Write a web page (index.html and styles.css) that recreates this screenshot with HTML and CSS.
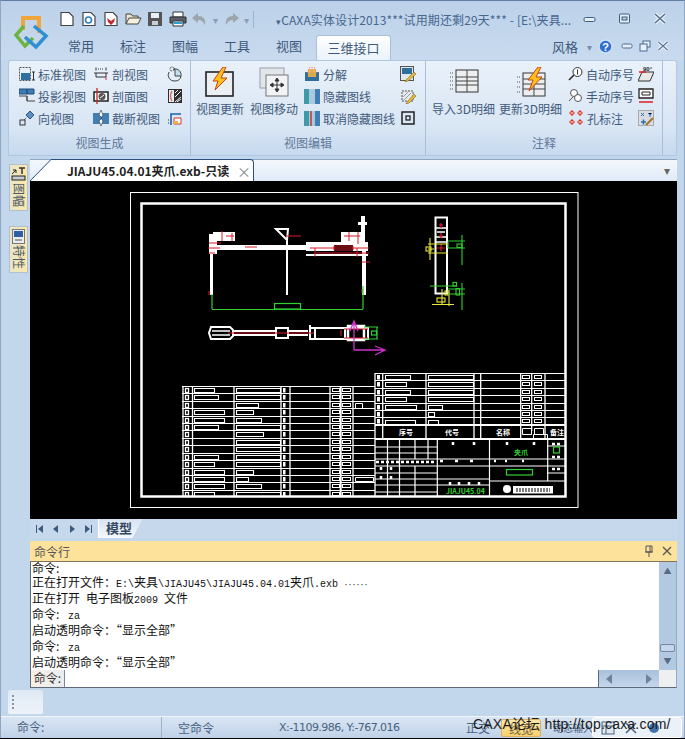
FILE: index.html
```html
<!DOCTYPE html>
<html lang="zh-CN">
<head>
    <meta charset="UTF-8">
    <title>CAXA实体设计2013</title>
    <link rel="stylesheet" href="styles.css">
</head>
<body>
<div class="window">
    <svg width="0" height="0" class="defs">
        <defs>
            <g id="row-a">
                <path d="M182 0h193" stroke="#fff" stroke-width="1"/>
                <rect x="185.500" y="2" width="3" height="4" fill="none" stroke="#fff" stroke-width="1.300"/>
                <rect x="283" y="1.500" width="2.500" height="4.500" fill="#fff"/>
                <rect x="332.500" y="2" width="7" height="3" fill="none" stroke="#fff"/>
                <rect x="342.500" y="2" width="8" height="3" fill="none" stroke="#fff"/>
            </g>
            <g id="row-b">
                <path d="M375 0h191" stroke="#fff" stroke-width="1"/>
                <rect x="377" y="1.500" width="3" height="4.500" fill="#fff"/>
                <rect x="522.500" y="2" width="7" height="3" fill="none" stroke="#fff"/>
                <rect x="534.500" y="2" width="7" height="3" fill="none" stroke="#fff"/>
            </g>
        </defs>
    </svg>

    <header class="head">
        <div class="logo-box">
            <svg class="logo" width="36" height="36" viewBox="0 0 36 36">
                <path d="M10 16V4h16v15" fill="none" stroke="#f0a63a" stroke-width="4"/>
                <path d="M11 12L3 21l9 11 8-8" fill="none" stroke="#6cb33f" stroke-width="3.500"/>
                <path d="M21 12l12 10-10 11-11-10" fill="none" stroke="#2f8fd0" stroke-width="3.500"/>
            </svg>
        </div>
        <div class="head-main">
            <div class="titlebar">
                <div class="qat">
                    <svg class="qat-icon" width="16" height="16" viewBox="0 0 16 16"><path d="M2 1.500h8l4 4v9H2z" fill="#fff" stroke="#444" stroke-width="1.200"/></svg>
                    <svg class="qat-icon" width="16" height="16" viewBox="0 0 16 16"><path d="M2 1.500h8l4 4v9H2z" fill="#fff" stroke="#444" stroke-width="1.200"/><circle cx="7.500" cy="9" r="3" fill="none" stroke="#2a7fb8" stroke-width="1.600"/></svg>
                    <svg class="qat-icon" width="16" height="16" viewBox="0 0 16 16"><path d="M2 1.500h8l4 4v9H2z" fill="#fff" stroke="#444" stroke-width="1.200"/><path d="M4 7l4 3 4-3-1 4-3 3-3-3z" fill="#c9252a"/></svg>
                    <svg class="qat-icon qat-folder" width="17" height="16" viewBox="0 0 17 16"><path d="M1 13V3h5l1.500 2H13v3" fill="#e9e4c8" stroke="#444"/><path d="M1 13l3-6h12l-3 6z" fill="#f5f1dc" stroke="#444"/></svg>
                    <svg class="qat-icon" width="16" height="16" viewBox="0 0 16 16"><path d="M1 1h14v14H1z" fill="#555"/><path d="M4 2h8v5H4z" fill="#e8eef5"/><path d="M5 10h6v4H5z" fill="#c8ced6"/></svg>
                    <svg class="qat-icon qat-print" width="18" height="16" viewBox="0 0 18 16"><path d="M4 1h10v5H4z" fill="#fff" stroke="#333"/><path d="M1 6h16v6H1z" fill="#58606a" stroke="#333"/><path d="M4 10h10v5H4z" fill="#fff" stroke="#333"/><path d="M5 12h8" stroke="#2a9fd0" stroke-width="2"/></svg>
                    <svg class="qat-icon" width="16" height="16" viewBox="0 0 16 16"><path d="M1 7l6-5v3c5 0 8 3 7 9-2-4-4-5-7-5v3z" fill="#9aa6a8"/></svg>
                    <span class="qat-drop">▾</span>
                    <svg class="qat-icon qat-print" width="16" height="16" viewBox="0 0 16 16"><path d="M15 7L9 2v3C4 5 1 8 2 14c2-4 4-5 7-5v3z" fill="#9aa6a8"/></svg>
                    <span class="qat-drop qat-drop-last">▾</span>
                    <span class="qat-sep"></span>
                </div>
                <div class="title"><span class="title-mark">▾</span>CAXA实体设计2013***试用期还剩29天*** - [E:\夹具...</div>
                <div class="win-btns">
                    <svg width="14" height="14" viewBox="0 0 14 14"><rect x="1" y="5.500" width="11" height="4" rx="1.500" fill="#e6eef8" stroke="#3f5d82"/></svg>
                    <svg width="14" height="14" viewBox="0 0 14 14"><rect x="1.500" y="2" width="10" height="9" rx="1" fill="#e6eef8" stroke="#3f5d82"/><rect x="4" y="5" width="5" height="3" fill="#b9cde6" stroke="#3f5d82"/></svg>
                    <svg width="14" height="14" viewBox="0 0 14 14"><path d="M2 2l10 9M12 2L2 11" stroke="#e8eef6" stroke-width="4"/><path d="M2 2l10 9M12 2L2 11" stroke="#56708f" stroke-width="1.500"/></svg>
                </div>
            </div>
            <nav class="tabs">
                <span class="tab">常用</span>
                <span class="tab">标注</span>
                <span class="tab">图幅</span>
                <span class="tab">工具</span>
                <span class="tab">视图</span>
                <span class="tab tab-active">三维接口</span>
                <span class="tabs-right">
                    <span class="style-label">风格</span>
                    <span class="style-drop">▾</span>
                    <svg width="15" height="15" viewBox="0 0 15 15"><circle cx="7.500" cy="7.500" r="6.500" fill="#2f6fd0" stroke="#cfe0f5" stroke-width="1.500"/><text x="7.500" y="11.500" font-size="11" font-weight="700" text-anchor="middle" fill="#fff" font-family="Liberation Sans">?</text></svg>
                    <svg class="mdi-min" width="12" height="12" viewBox="0 0 12 12"><rect x="1" y="4" width="10" height="4" rx="1.500" fill="#e6eef8" stroke="#4d6a8e"/></svg>
                    <svg width="12" height="12" viewBox="0 0 12 12"><rect x="4" y="1" width="7" height="6" fill="#e6eef8" stroke="#4d6a8e"/><rect x="1" y="4" width="7" height="7" fill="#e6eef8" stroke="#4d6a8e"/></svg>
                    <svg width="12" height="12" viewBox="0 0 12 12"><path d="M1.500 2l9 8M10.500 2l-9 8" stroke="#eef3f9" stroke-width="3.500"/><path d="M1.500 2l9 8M10.500 2l-9 8" stroke="#5d7896" stroke-width="1.200"/></svg>
                </span>
            </nav>
        </div>
    </header>

    <section class="ribbon">
        <div class="group group-gen">
            <div class="group-body small-grid">
                <div class="sm"><svg width="16" height="16" viewBox="0 0 16 16"><rect x="0.500" y="1.500" width="11" height="13" fill="none" stroke="#555" stroke-dasharray="2 1"/><rect x="2" y="7" width="9" height="7" fill="#2d6f9e"/><path d="M13 6h3M14.500 6v8M13 14h3" stroke="#333"/></svg>标准视图</div>
                <div class="sm"><svg width="16" height="16" viewBox="0 0 16 16"><path d="M3 1.500v3M13 1.500v3M1 7h14M3 7v4h10V7" fill="none" stroke="#333"/><path d="M5 3h6" stroke="#333" stroke-dasharray="1 1"/><path d="M13 11v3" stroke="#c33"/></svg>剖视图</div>
                <div class="sm"><svg width="16" height="16" viewBox="0 0 16 16"><circle cx="5" cy="3" r="2" fill="none" stroke="#444" stroke-dasharray="2 1"/><path d="M7 3a6 6 0 0 1 7 7H8V3z" fill="#bfe0ec" stroke="#444"/><path d="M2 6a6 6 0 0 0 6 9 6 6 0 0 0 6-5" fill="none" stroke="#444"/></svg></div>
                <div class="sm"><svg width="16" height="16" viewBox="0 0 16 16"><path d="M0 1h8v5H0zM8 1h7v5H8z" fill="#3e7db3" stroke="#1f4f7d"/><path d="M0 8h8v5h8" fill="none" stroke="#444"/><path d="M8 8v5" stroke="#444"/></svg>投影视图</div>
                <div class="sm"><svg width="16" height="16" viewBox="0 0 16 16"><rect x="1" y="4" width="14" height="9" fill="#fff" stroke="#222" stroke-width="1.500"/><circle cx="9" cy="8.500" r="3.500" fill="#555"/><path d="M7 10l4-3" stroke="#fff"/><path d="M4 0v16" stroke="#c22" stroke-width="1.300"/></svg>剖面图</div>
                <div class="sm"><svg width="16" height="16" viewBox="0 0 16 16"><rect x="1" y="1" width="14" height="14" fill="#2f2f2f"/><rect x="2" y="2" width="5" height="12" fill="#eaeef2"/><path d="M5 3q-3 5 0 10" fill="none" stroke="#c77" stroke-width="1.500"/><path d="M8 14l6-5M8 9l6-6M8 5l3-3M10 14l4-3" stroke="#fff"/></svg></div>
                <div class="sm"><svg width="16" height="16" viewBox="0 0 16 16"><rect x="1" y="10" width="5" height="5" fill="none" stroke="#333"/><path d="M5 10l5-5" stroke="#333" stroke-dasharray="1 1"/><path d="M7 5l4-4 4 4-4 4z" fill="#5d8fc0" stroke="#2f5680"/></svg>向视图</div>
                <div class="sm"><svg width="16" height="16" viewBox="0 0 16 16"><rect x="0" y="3" width="16" height="11" fill="#3f7fb5"/><path d="M8 0l-2 5 3 3-3 3 2 5 2-5-2-3 2-3z" fill="#fff" stroke="#444" stroke-width="0.700"/></svg>截断视图</div>
                <div class="sm"><svg width="16" height="16" viewBox="0 0 16 16"><path d="M4 15V4h10" fill="none" stroke="#1f5fb0" stroke-width="1.600"/><path d="M7 8h7v6H7z" fill="#fff" stroke="#d33"/><path d="M7 11h4v3H7z" fill="#f2b23e"/><path d="M1 10h1M1 13h1" stroke="#333"/></svg></div>
            </div>
            <div class="group-label">视图生成</div>
        </div>

        <div class="group group-edit">
            <div class="group-body">
                <div class="lg lg-edit">
                    <svg width="30" height="30" viewBox="0 0 30 30"><rect x="1" y="5" width="27" height="24" fill="#eceff2" stroke="#222" stroke-width="1.600"/><path d="M18 0L8 14h5l-3 9 12-12h-6l5-11z" fill="#ffc21a" stroke="#c8401a"/></svg>
                    <span>视图更新</span>
                </div>
                <div class="lg lg-edit">
                    <svg width="30" height="30" viewBox="0 0 30 30"><rect x="1" y="1" width="24" height="20" fill="#e2e6ea" stroke="#9a9fa5"/><rect x="7" y="8" width="22" height="21" fill="#f1f3f5" stroke="#777"/><path d="M18 12v12M12 18h12M18 11l-2 3h4zM18 25l-2-3h4zM11 18l3-2v4zM25 18l-3-2v4z" stroke="#333" fill="#333"/></svg>
                    <span>视图移动</span>
                </div>
                <div class="edit-col">
                    <div class="sm"><svg width="16" height="16" viewBox="0 0 16 16"><rect x="1" y="6" width="14" height="9" fill="#2f6f9e"/><rect x="4" y="3" width="8" height="8" fill="#f0b040" opacity="0.900"/><path d="M3 7l3-6M8 1v8M13 7l-3-6" stroke="#d77" stroke-dasharray="1 1"/></svg>分解</div>
                    <div class="sm"><svg width="16" height="16" viewBox="0 0 16 16"><rect x="0" y="1" width="5" height="15" fill="#3e9aa8"/><rect x="5" y="1" width="6" height="15" fill="#a9c9de"/><rect x="11" y="1" width="5" height="15" fill="#3f7fb5"/></svg>隐藏图线</div>
                    <div class="sm"><svg width="16" height="16" viewBox="0 0 16 16"><rect x="0" y="1" width="5" height="15" fill="#3e9aa8"/><rect x="5" y="1" width="6" height="15" fill="#a9c9de"/><rect x="11" y="1" width="5" height="15" fill="#3f7fb5"/><path d="M7 1v15" stroke="#c33" stroke-width="1.500"/></svg>取消隐藏图线</div>
                </div>
                <div class="edit-icons">
                    <svg width="16" height="16" viewBox="0 0 16 16"><rect x="0.500" y="0.500" width="13" height="14" fill="#dfe6ee" stroke="#555"/><rect x="2" y="2" width="10" height="6" fill="#2f6f9e"/><path d="M6 14l8-8 2 2-8 7-3 1z" fill="#e5b93e" stroke="#8a6a1a" stroke-width="0.600"/></svg>
                    <svg width="16" height="16" viewBox="0 0 16 16"><path d="M2 3h11v10H2z" fill="#e9ecef" stroke="#555" stroke-dasharray="2 1"/><path d="M3 9l6-6M3 13l8-8" stroke="#99a"/><path d="M7 14l7-8 2 2-7 7-3 1z" fill="#e5b93e" stroke="#8a6a1a" stroke-width="0.600"/></svg>
                    <svg width="16" height="16" viewBox="0 0 16 16"><rect x="2" y="2" width="12" height="12" fill="none" stroke="#222" stroke-width="1.500"/><rect x="6" y="6" width="4" height="4" fill="none" stroke="#222" stroke-width="1.300"/></svg>
                </div>
            </div>
            <div class="group-label">视图编辑</div>
        </div>

        <div class="group group-note">
            <div class="group-body">
                <div class="lg lg-note">
                    <svg width="30" height="30" viewBox="0 0 30 30"><rect x="7" y="3" width="22" height="22" fill="#eceef0" stroke="#333"/><path d="M7 10h22M7 14h22M7 18h22M18 3v22" stroke="#444"/><path d="M1 6h3M1 10h3M1 14h3M1 18h3M1 22h3" stroke="#555" stroke-dasharray="1 1"/></svg>
                    <span>导入3D明细</span>
                </div>
                <div class="lg lg-note">
                    <svg width="30" height="30" viewBox="0 0 30 30"><rect x="7" y="6" width="22" height="23" fill="#eceef0" stroke="#333"/><path d="M7 12h22M7 17h22M7 22h22M18 6v23" stroke="#444"/><path d="M1 10h3M1 15h3M1 20h3M1 25h3" stroke="#555" stroke-dasharray="1 1"/><path d="M22 0L12 13h5l-4 11 13-14h-6l5-10z" fill="#ffc21a" stroke="#c8401a"/></svg>
                    <span>更新3D明细</span>
                </div>
                <div class="note-col">
                    <div class="sm"><svg width="15" height="16" viewBox="0 0 15 16"><circle cx="9.500" cy="6" r="4.500" fill="#fff" stroke="#333"/><path d="M6 9l-5 5" stroke="#222" stroke-width="1.500"/><path d="M9.500 3.500v5" stroke="#333"/></svg>自动序号</div>
                    <div class="sm"><svg width="15" height="16" viewBox="0 0 15 16"><circle cx="6" cy="5" r="3.500" fill="#fff" stroke="#555"/><circle cx="10" cy="10" r="3.500" fill="#fff" stroke="#555"/><path d="M1 13l4-4" stroke="#555"/></svg>手动序号</div>
                    <div class="sm"><svg width="16" height="16" viewBox="0 0 16 16"><g fill="#d9362b"><path d="M4 0l3 3-3 3-3-3z"/><path d="M12 0l3 3-3 3-3-3z"/><path d="M4 9l3 3-3 3-3-3z"/><path d="M12 9l3 3-3 3-3-3z"/></g><path d="M2.500 3h3M10.500 3h3M2.500 12h3M10.500 12h3" stroke="#fff"/></svg>孔标注</div>
                </div>
                <div class="note-icons">
                    <svg width="16" height="16" viewBox="0 0 16 16"><path d="M4 6h12l-4 9H0z" fill="#e8e8e8" stroke="#333"/><path d="M1 6h7" stroke="#d22" stroke-width="1.500"/><text x="5" y="5" font-size="6" font-weight="700" fill="#222" font-family="Liberation Sans">90°</text></svg>
                    <svg width="16" height="16" viewBox="0 0 16 16"><path d="M1 1h14v9H1z" fill="#fff" stroke="#222" stroke-width="1.300"/><path d="M4 4h8v3H4z" fill="none" stroke="#222"/><path d="M1 14h14" stroke="#d22" stroke-width="1.500"/></svg>
                    <svg width="16" height="16" viewBox="0 0 16 16"><rect x="0.500" y="0.500" width="15" height="15" fill="#d8dce0" stroke="#aaa"/><path d="M3 3l3 3M6 3L3 6M10 3l2 2 2-2M12 5v2" stroke="#2f6fb0"/><path d="M3 12h5M5.500 9.500v5" stroke="#2f6fb0" stroke-width="1.500"/><path d="M8 15l7-7" stroke="#a8702a" stroke-width="2"/></svg>
                </div>
            </div>
            <div class="group-label">注释</div>
        </div>
    </section>

    <div class="workspace">
        <aside class="side">
            <div class="side-tab">
                <svg width="15" height="15" viewBox="0 0 15 15"><path d="M1 7l4-4h-3M5 3v3" fill="none" stroke="#222"/><path d="M8 1h6M11 1v6" stroke="#333" stroke-width="1.500"/><rect x="1" y="9" width="13" height="4" fill="#c8cdd2" stroke="#222"/></svg>
                <span class="side-text">图幅</span>
            </div>
            <div class="side-tab">
                <svg width="13" height="15" viewBox="0 0 13 15"><rect x="0.500" y="0.500" width="12" height="14" fill="#e8edf2" stroke="#777"/><rect x="2" y="2" width="9" height="6" fill="#2f5fa0"/><path d="M3 11h7" stroke="#555"/></svg>
                <span class="side-text">特性</span>
            </div>
        </aside>

        <main class="main">
            <div class="doc-tabs">
                <svg class="doc-slant" width="22" height="22" viewBox="0 0 22 22"><path d="M0 22L21 1h1v21z" fill="#fff"/><path d="M0 22L21 0.500h1" fill="none" stroke="#2d4f7c"/></svg>
                <div class="doc-tab">
                    <span class="doc-name">JIAJU45.04.01夹爪.exb-只读</span>
                    <span class="doc-close">×</span>
                </div>
                <span class="doc-menu">▾</span>
            </div>

            <svg class="canvas" width="647" height="338" viewBox="30 180 647 338">
                <rect x="30" y="180" width="647" height="338" fill="#000"/>
                <rect x="130.500" y="191.500" width="447.500" height="315" fill="none" stroke="#fff"/>
                <rect x="141.500" y="202.500" width="424" height="293" fill="none" stroke="#fff" stroke-width="2.500"/>

                <!-- main view -->
                <g fill="#fff">
                    <rect x="212" y="244" width="95" height="5"/>
                    <rect x="210" y="250" width="3" height="44"/>
                    <rect x="209" y="233" width="8" height="20"/>
                    <rect x="213" y="231" width="22" height="9"/>
                    <rect x="341" y="231" width="22" height="10"/>
                    <rect x="361" y="215" width="4" height="26"/>
                    <rect x="358" y="221" width="9" height="3"/>
                    <rect x="362" y="241" width="4" height="53"/>
                    <rect x="286" y="240" width="2" height="54"/>
                    <rect x="306" y="241" width="62" height="3"/>
                    <rect x="306" y="244" width="28" height="6"/>
                    <rect x="306" y="253" width="62" height="2"/>
                </g>
                <path d="M276 228h12l-1 11z" fill="none" stroke="#fff" stroke-width="2"/>
                <rect x="353" y="244" width="15" height="6" fill="#fff"/>
                <g fill="none" stroke="#d8192b" stroke-width="1">
                    <path d="M209 242h12M208 247h12M209 252h6M222 230v10M232 232v8M226 235h8M344 235h10M349 231v9M358 231v12M354 235h6"/>
                    <path d="M286 235h15M245 246h12M310 247h59M334 245h19v4h-19zM315 252h54M315 247v9M357 247v9M362 261h8M209 290v4M362 288v4"/>
                </g>
                <g fill="none" stroke="#2fd02f" stroke-width="1.200">
                    <path d="M212 293v15M363 285v23M212 308.500h151"/>
                    <rect x="274.500" y="302.500" width="26" height="5.500"/>
                </g>

                <!-- plan view -->
                <g fill="none" stroke="#fff" stroke-width="2">
                    <path d="M211 326h19l3 3v6l-3 3h-19l-2-6z"/>
                    <path d="M212 330h18M212 334h18" stroke-width="1.500"/>
                    <path d="M232 330h43M232 334h43M289 330h19M289 334h19"/>
                    <rect x="276" y="327" width="12" height="10"/>
                    <path d="M310 327h59M310 338h59M310 324v15M315 327v11M345 326v12M368 326v12"/>
                    <path d="M348 325h16v14h-16z" stroke-width="2.500"/>
                </g>
                <path d="M228 332h86M344 328h24M344 337h24M341 329v6" fill="none" stroke="#d8192b"/>
                <g fill="none" stroke="#2fd02f" stroke-width="1.200">
                    <path d="M364 326h14M364 338h14M377 326v12"/>
                    <rect x="371.500" y="330" width="5" height="4"/>
                </g>
                <path d="M354 349v-29M354 349h31M350 330l4-10 4 10M375 345l10 4-10 5" fill="none" stroke="#d030d0" stroke-width="1.300"/>

                <!-- side view -->
                <rect x="435.500" y="216.500" width="11.500" height="76" fill="none" stroke="#fff" stroke-width="2"/>
                <path d="M436 227h11M436 236h11M436 241h11M437 231h8" stroke="#fff" stroke-width="1.500"/>
                <path d="M441 222v5M439 224h4M441 232v5M439 235h4M441 243v7M437 247h8" stroke="#d8192b" stroke-width="1.200"/>
                <g fill="none" stroke="#e8e83a" stroke-width="1.100">
                    <path d="M430 237v22M428 243h20M428 252h20M428 248h6"/>
                    <rect x="426" y="246" width="5" height="4"/>
                    <path d="M442 288v16M449 289v16M432 303.500h22"/>
                    <rect x="437" y="297" width="8" height="4"/>
                    <rect x="445" y="290" width="3" height="4"/>
                </g>
                <g fill="none" stroke="#2fd02f" stroke-width="1.100">
                    <path d="M448 240h17M448 247h17M462 234v30M448 241v6"/>
                    <rect x="457" y="243" width="5" height="3.500"/>
                    <path d="M430 285h27M448 288h17M448 293h17M462 282v27"/>
                    <rect x="453" y="281.500" width="3.500" height="3.500"/>
                    <rect x="456" y="287.500" width="3.500" height="6.500"/>
                </g>

                <!-- parts list, left half -->
                <g>
                    <use href="#row-a" y="385.500"/><use href="#row-a" y="392.500"/><use href="#row-a" y="400.500"/>
                    <use href="#row-a" y="407.500"/><use href="#row-a" y="415.500"/><use href="#row-a" y="422.500"/>
                    <use href="#row-a" y="429.500"/><use href="#row-a" y="437.500"/><use href="#row-a" y="444.500"/>
                    <use href="#row-a" y="452.500"/><use href="#row-a" y="459.500"/><use href="#row-a" y="467.500"/>
                    <use href="#row-a" y="474.500"/><use href="#row-a" y="481.500"/><use href="#row-a" y="489.500"/>
                </g>
                <path d="M183 385v110M192.500 385v110M234 385v110M281 385v110M290 385v110M330 385v110M353 385v110M375 372v124" stroke="#fff" stroke-width="1.300"/>
                <path d="M340.700 385v110" stroke="#fff" stroke-width="2"/>
                <path fill="none" stroke="#fff" stroke-width="1.100" d="M194.500 387.500h20v4h-20zM194.500 394.500h24v4h-24zM194.500 409.500h30v4h-30zM194.500 417.500h30v4h-30zM194.500 424.500h24v4h-24zM194.500 454.500h24v4h-24zM194.500 461.500h20v4h-20zM194.500 469.500h30v4h-30zM194.500 476.500h30v4h-30zM194.500 483.500h30v4h-30zM194.500 491.500h20v4h-20z"/>
                <path fill="none" stroke="#fff" stroke-width="1.100" d="M236.500 387.500h44v4h-44zM236.500 394.500h44v4h-44zM236.500 402.500h22v4h-22zM236.500 409.500h17v4h-17zM236.500 417.500h25v4h-25zM236.500 424.500h44v4h-44zM236.500 431.500h27v4h-27zM236.500 439.500h44v4h-44zM236.500 446.500h44v4h-44zM236.500 454.500h44v4h-44zM236.500 461.500h44v4h-44zM236.500 469.500h17v4h-17zM236.500 476.500h12v4h-12zM236.500 483.500h25v4h-25zM236.500 491.500h44v4h-44z"/>
                <path fill="none" stroke="#fff" d="M355.500 402.500h7v5h-7zM355.500 476.500h18v4h-18z"/>

                <!-- parts list, right half -->
                <g>
                    <use href="#row-b" y="372.500"/><use href="#row-b" y="379.500"/><use href="#row-b" y="387.500"/>
                    <use href="#row-b" y="394.500"/><use href="#row-b" y="402.500"/><use href="#row-b" y="409.500"/>
                    <use href="#row-b" y="416.500"/>
                </g>
                <path d="M382.700 372v66M426 372v66M474 372v66M480.700 372v66M520.700 372v66M531.700 372v58M545 372v66" stroke="#fff" stroke-width="1.300"/>
                <path d="M375 424h191M375 438h191" stroke="#fff" stroke-width="2"/>
                <path fill="none" stroke="#fff" stroke-width="1.100" d="M385.500 374.500h25v4h-25zM385.500 381.500h21v4h-21zM385.500 389.500h25v4h-25zM385.500 396.500h21v4h-21zM385.500 404.500h31v4h-31zM385.500 419.500h30v4h-30zM428.500 374.500h45v4h-45zM428.500 381.500h45v4h-45zM428.500 389.500h45v4h-45zM428.500 396.500h45v4h-45zM428.500 404.500h14v4h-14zM428.500 411.500h6v4h-6zM428.500 419.500h10v4h-10z"/>
                <path fill="none" stroke="#fff" d="M522.500 427.500h9v6h-9zM534.500 427.500h9v6h-9zM533.500 433.500h14v5h-14z"/>
                <g class="cad-text">
                    <text x="399" y="434">序号</text>
                    <text x="445" y="434">代号</text>
                    <text x="496" y="434">名称</text>
                    <text x="550" y="434">备注</text>
                </g>

                <!-- title block -->
                <path d="M375 446h62M375 452h62M375 458h172M375 465h62M375 472h62M375 478h114M375 484h114M375 491h62M437 465h111M489 480h77M547 445h19M547 458h19M547 465h19M547 472h19" stroke="#fff"/>
                <path d="M387.500 438v58M399.500 438v58M415 438v20M428 438v20M415 465v31M437.300 438v58M489.500 438v58M547.700 438v42" stroke="#fff" stroke-width="1.200"/>
                <path d="M376 461h60M440 460h5M455 460h5M470 460h5M494 460h2M505 460h2M522 460h2M453 441v5M474 441v5M507 441v5M534 441v5M450 481v4M459 481v4M469 481v4M479 481v4M381 466v5M391 466v5M381 475v5M391 475v5M552 443h10M552 456h10M552 468h10" stroke="#fff" stroke-width="2.500" stroke-dasharray="3 2"/>
                <g fill="none" stroke="#2fd02f" stroke-width="1.200">
                    <rect x="506.500" y="468.500" width="26" height="5.500"/>
                    <rect x="553.500" y="446" width="6" height="6"/>
                </g>
                <text class="cad-green" x="514" y="454">夹爪</text>
                <text class="cad-green" x="446" y="493">JIAJU45.04</text>
                <circle cx="507" cy="488" r="4" fill="#fff"/>
                <rect x="513" y="485" width="40" height="7.500" fill="#fff"/>
                <path d="M516 488h34M516 490h34" stroke="#000" stroke-dasharray="2 1"/>
            </svg>

            <div class="sheet-bar">
                <span class="nav"><svg width="8" height="8" viewBox="0 0 8 8"><path d="M7 0v8L2 4zM0 0h1v8H0z" fill="#3f5a7c"/></svg></span>
                <span class="nav"><svg width="8" height="8" viewBox="0 0 8 8"><path d="M6 0v8L1 4z" fill="#3f5a7c"/></svg></span>
                <span class="nav"><svg width="8" height="8" viewBox="0 0 8 8"><path d="M2 0v8l5-4z" fill="#3f5a7c"/></svg></span>
                <span class="nav"><svg width="8" height="8" viewBox="0 0 8 8"><path d="M1 0v8l5-4zM7 0h1v8H7z" fill="#3f5a7c"/></svg></span>
                <span class="sheet-tab">模型</span>
            </div>

            <section class="cmd">
                <div class="cmd-head">
                    <span>命令行</span>
                    <span class="cmd-tools">
                        <svg width="10" height="12" viewBox="0 0 10 12"><path d="M2 1h6v6H2zM1 7h8M5 7v5M6 1v6" fill="none" stroke="#555"/></svg>
                        <svg width="10" height="10" viewBox="0 0 10 10"><path d="M1 1l8 8M9 1L1 9" stroke="#555" stroke-width="1.300"/></svg>
                    </span>
                </div>
                <div class="cmd-body">
                    <div class="cmd-main">
                        <div class="cmd-log">
                            <div class="cmd-line">命令:</div>
                            <div class="cmd-line">正在打开文件：<span class="mono">E:\</span>夹具<span class="mono">\JIAJU45\JIAJU45.04.01</span>夹爪<span class="mono">.exb </span><span class="dots">······</span></div>
                            <div class="cmd-line">正在打开<span class="mono"> </span>电子图板<span class="mono">2009 </span>文件</div>
                            <div class="cmd-line">命令: <span class="mono za">za</span></div>
                            <div class="cmd-line">启动透明命令：“显示全部”</div>
                            <div class="cmd-line">命令: <span class="mono za">za</span></div>
                            <div class="cmd-line">启动透明命令：“显示全部”</div>
                        </div>
                        <div class="cmd-input">
                            <span class="cmd-prompt">命令:</span>
                            <span class="cmd-field"></span>
                            <span class="hscroll">
                                <svg width="6" height="10" viewBox="0 0 6 10"><path d="M6 0v10L0 5z" fill="#6f8299"/></svg>
                                <svg width="6" height="10" viewBox="0 0 6 10"><path d="M0 0v10l6-5z" fill="#6f8299"/></svg>
                            </span>
                        </div>
                    </div>
                    <div class="vscroll">
                        <span class="vs-arrow">▲</span>
                        <span class="vs-space"></span>
                        <span class="vs-thumb"></span>
                        <span class="vs-arrow">▼</span>
                        <span class="vs-corner"></span>
                    </div>
                </div>
            </section>
        </main>
    </div>

    <div class="dock-strip">
        <div class="dock-handle"><span class="grip"></span></div>
    </div>

    <footer class="status">
        <span class="st-cmd">命令:</span>
        <span class="st-name">空命令</span>
        <span class="st-coord">X:-1109.986, Y:-767.016</span>
        <span class="st-mode">正交</span>
        <span class="st-active">线宽</span>
        <span class="st-mode st-dyn">动态输入</span>
        <span class="st-icons">
            <svg width="14" height="14" viewBox="0 0 14 14"><rect x="1" y="1" width="12" height="12" fill="#dfe8f2" stroke="#47617f"/><path d="M1 5h12M5 5v8" stroke="#47617f"/></svg>
            <svg width="14" height="14" viewBox="0 0 14 14"><path d="M2 2l10 10M12 2L2 12" stroke="#47617f" stroke-width="1.500"/></svg>
            <svg width="14" height="14" viewBox="0 0 14 14"><circle cx="7" cy="7" r="5" fill="#3f72ae"/></svg>
        </span>
        <span class="watermark">CAXA论坛 http://top.caxa.com/</span>
    </footer>
</div>
</body>
</html>
```

FILE: styles.css
```css
* {
    box-sizing: border-box;
}
html, body {
    margin: 0;
    padding: 0;
}
body {
    width: 685px;
    height: 739px;
    overflow: hidden;
    background: #000;
    font-family: "Noto Sans CJK SC", "Liberation Sans", sans-serif;
    font-size: 12px;
    color: #3f5a7c;
}
svg {
    display: block;
    flex: none;
}
.defs {
    position: absolute;
}
.window {
    width: 685px;
    height: 738px;
    display: flex;
    flex-direction: column;
    background: #c3d7ec;
    border-top: 1px solid #5f7fa5;
    border-left: 1px solid #8ea6c2;
    border-right: 1px solid #8ea6c2;
    position: relative;
}

/* title + tabs */
.head {
    display: flex;
    height: 59px;
    background: linear-gradient(#bcd1e9, #c8daee);
    flex: none;
}
.logo-box {
    width: 58px;
    flex: none;
    padding: 13px 0 0 12px;
}
.head-main {
    flex: 1;
    min-width: 0;
    display: flex;
    flex-direction: column;
}
.titlebar {
    height: 34px;
    display: flex;
    align-items: center;
    padding-top: 2px;
}
.qat {
    display: flex;
    align-items: center;
    width: 213px;
    flex: none;
}
.qat-icon {
    margin-right: 6px;
}
.qat-folder {
    margin-right: 5px;
}
.qat-print {
    margin-right: 4px;
}
.qat-drop {
    font-size: 10px;
    color: #8b9cb0;
    width: 11px;
    flex: none;
}
.qat-drop-last {
    width: 9px;
}
.qat-sep {
    width: 1px;
    height: 17px;
    background: #9db3cd;
}
.title {
    font-size: 12px;
    letter-spacing: 0.12px;
    color: #46668d;
    white-space: nowrap;
    width: 299px;
    flex: none;
    padding-left: 4px;
}
.title-mark {
    font-size: 9px;
}
.win-btns {
    display: flex;
    gap: 21px;
    margin-left: 12px;
}
.tabs {
    display: flex;
    height: 25px;
    position: relative;
    padding-left: 9px;
}
.tab {
    width: 52px;
    flex: none;
    line-height: 21px;
    font-size: 13px;
    color: #40597b;
}
.tab-active {
    width: 75px;
    margin-left: -12px;
    text-align: center;
    line-height: 23px;
    background: linear-gradient(#fff, #eaf2fb);
    border: 1px solid #a9c0da;
    border-bottom: none;
    border-radius: 3px 3px 0 0;
}
.tabs-right {
    display: flex;
    align-items: center;
    height: 22px;
    margin-left: 161px;
}
.style-label {
    font-size: 13px;
    width: 35px;
    flex: none;
}
.style-drop {
    font-size: 10px;
    color: #7b8ea6;
    width: 11px;
    flex: none;
}
.mdi-min {
    margin: 0 6px 0 8px;
}
.tabs-right svg:last-child {
    margin-left: 6px;
}

/* ribbon */
.ribbon {
    display: flex;
    height: 96px;
    margin: 0 7px;
    flex: none;
    background: linear-gradient(#e9f1fa, #d9e6f4 70%, #c6d9ee);
    border: 1px solid #b2c8e0;
    border-radius: 3px 3px 0 0;
    padding-right: 13px;
}
.group {
    display: flex;
    flex-direction: column;
    border-right: 1px solid #aac0da;
    flex: none;
}
.group-gen {
    width: 182px;
}
.group-edit {
    width: 235px;
}
.group-note {
    flex: 1;
}
.group-body {
    flex: 1;
    display: flex;
    min-height: 0;
}
.group-label {
    height: 24px;
    line-height: 23px;
    text-align: center;
    color: #5f7897;
}
.small-grid {
    display: grid;
    grid-template-columns: 74px 74px 20px;
    grid-auto-rows: 22px;
    padding: 2px 0 0 10px;
}
.sm {
    display: flex;
    align-items: center;
    gap: 3px;
    height: 22px;
    white-space: nowrap;
    color: #3f5a7c;
}
.lg {
    width: 54px;
    flex: none;
    display: flex;
    flex-direction: column;
    align-items: center;
    padding-top: 6px;
    white-space: nowrap;
}
.lg span {
    margin-top: 2px;
    line-height: 20px;
}
.group-edit .group-body {
    padding-left: 2px;
}
.edit-col {
    width: 99px;
    flex: none;
    padding: 2px 0 0 3px;
}
.edit-icons, .note-icons {
    display: flex;
    flex-direction: column;
    gap: 6px;
    padding-top: 5px;
}
.group-note .group-body {
    padding-left: 4px;
}
.lg-note {
    width: 67px;
}
.note-col {
    width: 74px;
    flex: none;
    padding: 2px 0 0 4px;
}

/* workspace */
.workspace {
    flex: 1;
    display: flex;
    min-height: 0;
    padding-top: 3px;
}
.side {
    width: 29px;
    flex: none;
    display: flex;
    flex-direction: column;
    gap: 15px;
    padding: 5px 0 0 8px;
}
.side-tab {
    width: 19px;
    height: 47px;
    display: flex;
    flex-direction: column;
    align-items: center;
    gap: 1px;
    padding-top: 2px;
    background: linear-gradient(90deg, #e8e6c8, #fde7a8);
    border: 1px solid #b3bfca;
}
.side-text {
    writing-mode: vertical-rl;
    text-orientation: sideways;
    line-height: 14px;
    color: #4d5a66;
}
.main {
    flex: 1;
    min-width: 0;
    margin-right: 7px;
    display: flex;
    flex-direction: column;
}
.doc-tabs {
    height: 22px;
    flex: none;
    display: flex;
    align-items: stretch;
    background: linear-gradient(#f4f8fd, #dfeaf6);
    border-top: 1px solid #8ca6c6;
    position: relative;
}
.doc-slant {
    margin-top: -1px;
}
.doc-tab {
    width: 202px;
    flex: none;
    display: flex;
    align-items: center;
    background: #fff;
    border-top: 1px solid #2d4f7c;
    border-right: 1px solid #2d4f7c;
    border-radius: 0 4px 0 0;
    margin-top: -1px;
    padding-left: 15px;
}
.doc-name {
    font-weight: 700;
    color: #222;
    width: 170px;
    flex: none;
    white-space: nowrap;
}
.doc-close {
    font-size: 14px;
    color: #8a8f96;
}
.doc-menu {
    margin-left: auto;
    margin-right: 7px;
    line-height: 20px;
    color: #666;
}
.canvas {
    flex: none;
}
.cad-text text {
    font-size: 7px;
    font-weight: 700;
    fill: #fff;
}
.cad-green {
    font-size: 7px;
    font-weight: 700;
    fill: #2fd02f;
}
.sheet-bar {
    height: 19px;
    flex: none;
    display: flex;
    align-items: center;
    padding-left: 2px;
    background: #c5d8ec;
}
.nav {
    width: 16px;
    display: flex;
    justify-content: center;
}
.sheet-tab {
    margin-left: 2px;
    width: 44px;
    height: 19px;
    line-height: 18px;
    padding-left: 7px;
    font-size: 13px;
    font-weight: 700;
    color: #33475f;
    background: #fff linear-gradient(#d7e3f1, #f4f8fc);
    border-left: 1px solid #fff;
    clip-path: polygon(0 0, 100% 0, 78% 100%, 0 100%);
}

/* command panel */
.cmd {
    margin-top: 3px;
    flex: 1;
    min-height: 0;
    display: flex;
    flex-direction: column;
}
.cmd-head {
    height: 21px;
    flex: none;
    display: flex;
    align-items: center;
    justify-content: space-between;
    padding: 0 5px 0 4px;
    background: #fde29c;
    border-bottom: 1px solid #7f7359;
    color: #555;
}
.cmd-tools {
    display: flex;
    align-items: center;
    gap: 8px;
}
.cmd-body {
    flex: 1;
    min-height: 0;
    display: flex;
    background: #fff;
    border-left: 1px solid #5d6a7a;
    border-right: 1px solid #9aaabd;
    border-bottom: 1px solid #5d6a7a;
}
.cmd-main {
    flex: 1;
    min-width: 0;
    display: flex;
    flex-direction: column;
}
.cmd-log {
    flex: 1;
    min-height: 0;
    padding-left: 1px;
    color: #111;
    overflow: hidden;
}
.cmd-line {
    height: 16px;
    line-height: 16px;
    white-space: nowrap;
}
.cmd-line:first-child {
    height: 14px;
    margin-top: -2px;
}
.mono {
    font-family: "Liberation Mono", monospace;
    font-size: 10px;
}
.za {
    margin-left: 6px;
}
.dots {
    font-family: "Liberation Mono", monospace;
    font-size: 6.670px;
    font-weight: 700;
}
.cmd-input {
    height: 17px;
    flex: none;
    display: flex;
}
.cmd-prompt {
    width: 34px;
    text-align: center;
    line-height: 16px;
    color: #333;
    background: linear-gradient(90deg, #f8efe4, #e8edf2);
    border-right: 1px solid #7b8899;
}
.cmd-field {
    flex: 1;
}
.hscroll {
    width: 61px;
    flex: none;
    display: flex;
    align-items: center;
    justify-content: space-between;
    padding: 0 7px;
    background: linear-gradient(#a9c1dc, #c4d6ea);
    border-left: 1px solid #5d6a7a;
}
.vscroll {
    width: 17px;
    flex: none;
    display: flex;
    flex-direction: column;
    align-items: center;
    background: #b3c8e1;
    color: #566a82;
    font-size: 8px;
}
.vs-arrow {
    height: 18px;
    line-height: 18px;
}
.vs-space {
    flex: 1;
}
.vs-thumb {
    width: 15px;
    height: 8px;
    flex: none;
    background: #c4d6ea;
    border: 1px solid #6f87a5;
    border-radius: 2px;
}
.vs-corner {
    width: 17px;
    height: 17px;
    flex: none;
    background: #eeeff1;
}

/* bottom */
.dock-strip {
    height: 28px;
    flex: none;
    padding: 2px 0 0 7px;
}
.dock-handle {
    width: 35px;
    height: 24px;
    display: flex;
    align-items: center;
    padding-left: 4px;
    background: linear-gradient(#dfe9f4, #eef3f9);
    border-radius: 2px;
}
.grip {
    width: 2px;
    height: 14px;
    background: repeating-linear-gradient(#8797aa 0 2px, transparent 2px 4px);
}
.status {
    height: 22px;
    flex: none;
    display: flex;
    align-items: center;
    position: relative;
    background: linear-gradient(#d9e5f3, #c0d2e8);
    border-top: 1px solid #f0f5fa;
    color: #47617f;
}
.st-cmd {
    width: 161px;
    flex: none;
    padding-left: 16px;
    height: 100%;
    line-height: 20px;
    border-right: 1px solid #a0b3ca;
}
.st-name {
    width: 117px;
    flex: none;
    padding-left: 16px;
}
.st-coord {
    width: 187px;
    flex: none;
    font-family: "DejaVu Sans", sans-serif;
    font-size: 11px;
    letter-spacing: -0.55px;
    white-space: nowrap;
}
.st-mode {
    width: 35px;
    flex: none;
}
.st-active {
    width: 40px;
    height: 18px;
    flex: none;
    text-align: center;
    line-height: 17px;
    background: linear-gradient(#fde6a8, #fbcf6b);
    border: 1px solid #d8b25f;
    border-radius: 2px;
    color: #6e6340;
}
.st-dyn {
    width: 39px;
    margin-left: 12px;
    font-size: 10px;
    white-space: nowrap;
}
.st-icons {
    display: flex;
    gap: 9px;
    flex: none;
    align-items: center;
    width: 90px;
    height: 21px;
    padding-left: 8px;
    background: #eaf1f8;
    border: 1px solid #fff;
    border-radius: 3px;
}
.watermark {
    position: absolute;
    left: 472px;
    top: -1px;
    font-family: "Liberation Sans", "Noto Sans CJK SC", sans-serif;
    font-size: 14px;
    letter-spacing: 0.2px;
    line-height: 17px;
    color: #1a1a1a;
    white-space: nowrap;
}
```
